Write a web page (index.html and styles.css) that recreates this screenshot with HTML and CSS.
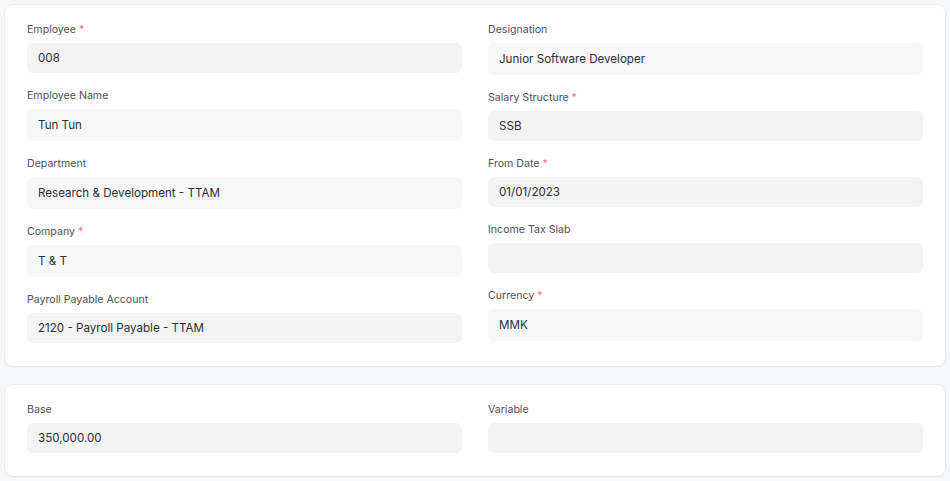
FILE: index.html
```html
<!DOCTYPE html>
<html lang="en">
<head>
  <meta charset="UTF-8" />
  <title>Salary Structure Assignment</title>
  <link rel="stylesheet" href="styles.css">
</head>
<body>
  <div class="form-card">
    <div class="form-column">
      <div class="field">
        <label class="field-label reqd">Employee</label>
        <div class="control">008</div>
      </div>
      <div class="field">
        <label class="field-label">Employee Name</label>
        <div class="control readonly">Tun Tun</div>
      </div>
      <div class="field">
        <label class="field-label">Department</label>
        <div class="control readonly">Research &amp; Development - TTAM</div>
      </div>
      <div class="field">
        <label class="field-label reqd">Company</label>
        <div class="control readonly">T &amp; T</div>
      </div>
      <div class="field">
        <label class="field-label">Payroll Payable Account</label>
        <div class="control">2120 - Payroll Payable - TTAM</div>
      </div>
    </div>
    <div class="form-column">
      <div class="field">
        <label class="field-label">Designation</label>
        <div class="control readonly">Junior Software Developer</div>
      </div>
      <div class="field">
        <label class="field-label reqd">Salary Structure</label>
        <div class="control">SSB</div>
      </div>
      <div class="field">
        <label class="field-label reqd">From Date</label>
        <div class="control">01/01/2023</div>
      </div>
      <div class="field">
        <label class="field-label">Income Tax Slab</label>
        <div class="control"></div>
      </div>
      <div class="field">
        <label class="field-label reqd">Currency</label>
        <div class="control readonly">MMK</div>
      </div>
    </div>
  </div>

  <div class="form-card">
    <div class="form-column">
      <div class="field">
        <label class="field-label">Base</label>
        <div class="control">350,000.00</div>
      </div>
    </div>
    <div class="form-column">
      <div class="field">
        <label class="field-label">Variable</label>
        <div class="control"></div>
      </div>
    </div>
  </div>
</body>
</html>
```

FILE: styles.css
```css
body {
  margin: 0;
  padding: 5px;
  font-family: Inter, "Liberation Sans", sans-serif;
  background: #f6f7f8;
  color: #1f272e;
}

.form-card {
  display: flex;
  gap: 26px;
  width: 940px;
  box-sizing: border-box;
  padding: 17px 22px 23px;
  margin-bottom: 19px;
  background: #fff;
  border-radius: 8px;
  box-shadow: 0 0 0 1px rgba(0, 0, 0, 0.035), 0 1px 3px rgba(0, 0, 0, 0.06);
}

.form-column {
  flex: 1;
  display: flex;
  flex-direction: column;
  gap: 15px;
}

.field-label {
  display: block;
  font-size: 10.6px;
  line-height: 16px;
  color: #4c5157;
  margin-bottom: 5px;
}

/* 必須項目の赤いアスタリスク */
.field-label.reqd::after {
  content: " *";
  color: #f07373;
}

.control {
  height: 30px;
  box-sizing: border-box;
  padding: 0 11px;
  display: flex;
  align-items: center;
  font-size: 11.6px;
  background: #f3f3f4;
  border-radius: 6px;
  color: #2a2f36;
}

.control.readonly {
  height: 32px;
  background: #f8f8f9;
}
```
